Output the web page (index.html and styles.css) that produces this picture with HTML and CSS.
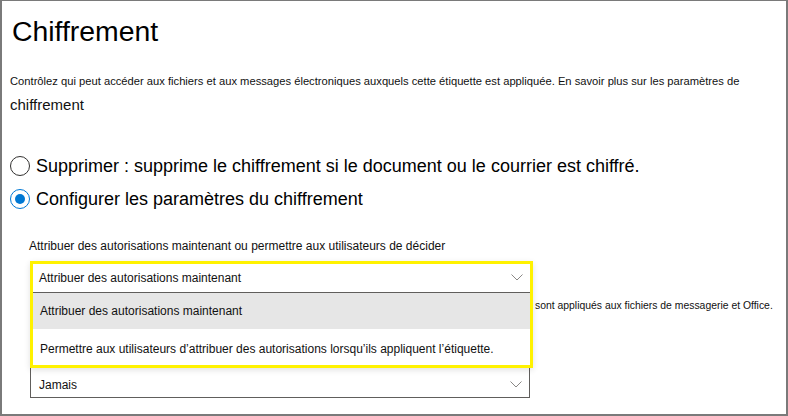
FILE: index.html
```html
<!DOCTYPE html>
<html lang="fr">
<head>
<meta charset="utf-8">
<title>Chiffrement</title>
<link rel="stylesheet" href="styles.css">
</head>
<body>
<div class="frame">
  <h1 class="title">Chiffrement</h1>
  <p class="desc">Contrôlez qui peut accéder aux fichiers et aux messages électroniques auxquels cette étiquette est appliquée. En savoir plus sur les paramètres de</p>
  <p class="desc-more">chiffrement</p>

  <div class="radios">
    <div class="radio-row">
      <span class="radio"></span>
      <span class="radio-label">Supprimer : supprime le chiffrement si le document ou le courrier est chiffré.</span>
    </div>
    <div class="radio-row">
      <span class="radio checked"><span class="dot"></span></span>
      <span class="radio-label">Configurer les paramètres du chiffrement</span>
    </div>
  </div>

  <div class="field">
    <div class="field-label">Attribuer des autorisations maintenant ou permettre aux utilisateurs de décider</div>
    <div class="dropdown">
      <div class="dd-panel">
        <div class="dd-select">
          <span>Attribuer des autorisations maintenant</span>
          <svg class="chev" width="12" height="7" viewBox="0 0 12 7"><path d="M0.5 0.5 L6 6 L11.5 0.5" fill="none" stroke="#8a8886" stroke-width="1"/></svg>
        </div>
        <div class="dd-option selected">Attribuer des autorisations maintenant</div>
        <div class="dd-option last">Permettre aux utilisateurs d’attribuer des autorisations lorsqu’ils appliquent l’étiquette.</div>
      </div>
    </div>
    <div class="hint">sont appliqués aux fichiers de messagerie et Office.</div>
    <div class="select2">
      <span>Jamais</span>
      <svg class="chev" width="12" height="7" viewBox="0 0 12 7"><path d="M0.5 0.5 L6 6 L11.5 0.5" fill="none" stroke="#8a8886" stroke-width="1"/></svg>
    </div>
  </div>
</div>
</body>
</html>
```
FILE: styles.css
```css
* { box-sizing: border-box; }
html, body { margin: 0; padding: 0; background: #fff; }
body { font-family: "Liberation Sans", Arial, sans-serif; color: #111; }

.frame {
  width: 788px;
  height: 416px;
  border: 2px solid #7a7a7a;
  border-top-width: 1px;
  padding: 14px 8px 0 8px;
  overflow: hidden;
}

.title {
  margin: 0;
  padding-left: 2px;
  font-size: 28.4px;
  line-height: 32px;
  font-weight: normal;
  color: #000;
}

.desc {
  margin: 26px 0 0 0;
  font-size: 11.2px;
  line-height: 16px;
  white-space: nowrap;
}

.desc-more {
  margin: 7px 0 0 0;
  font-size: 15px;
  line-height: 18px;
}

.radios {
  margin-top: 41px;
  display: flex;
  flex-direction: column;
  gap: 11px;
}

.radio-row {
  display: flex;
  align-items: center;
  height: 22px;
}

.radio {
  width: 20px;
  height: 20px;
  border-radius: 50%;
  border: 1.5px solid #323130;
  display: flex;
  align-items: center;
  justify-content: center;
  flex: none;
}

.radio.checked { border-color: #0078d4; }
.radio .dot {
  width: 10px;
  height: 10px;
  border-radius: 50%;
  background: #0078d4;
}

.radio-label {
  margin-left: 6px;
  font-size: 18px;
  line-height: 22px;
  color: #000;
  white-space: nowrap;
}

.field {
  margin: 28px 0 0 20px;
  width: 500px;
}

.field-label {
  font-size: 12px;
  line-height: 16px;
  white-space: nowrap;
  margin-left: -1px;
}

.dropdown {
  position: relative;
  height: 32px;
  margin-top: 7px;
}

.dd-panel {
  position: absolute;
  top: 0;
  left: 0;
  width: 503px;
  border: 3px solid #fff200;
  background: #fff;
  z-index: 2;
  box-shadow: 0 2px 6px rgba(0,0,0,0.12);
}

.dd-select {
  height: 29px;
  border-bottom: 1px solid #605e5c;
  display: flex;
  align-items: center;
  justify-content: space-between;
  padding: 0 7px 1px 6px;
  font-size: 12px;
  line-height: 16px;
  width: 497px;
}

.chev { display: block; flex: none; }

.dd-option {
  height: 36px;
  display: flex;
  align-items: center;
  padding-left: 7px;
  font-size: 12px;
  line-height: 16px;
  white-space: nowrap;
}

.dd-option.selected { background: #e6e6e6; }
.dd-option.last { padding-top: 4px; }

.hint {
  margin: 6px 0 0 505px;
  font-size: 10.4px;
  line-height: 14px;
  white-space: nowrap;
}

.select2 {
  margin-top: 53px;
  height: 32px;
  border: 1px solid #605e5c;
  display: flex;
  justify-content: space-between;
  align-items: flex-start;
  padding: 10px 7px 0 8px;
  font-size: 12px;
  line-height: 16px;
}

.select2 .chev { margin-top: 4px; }
```
